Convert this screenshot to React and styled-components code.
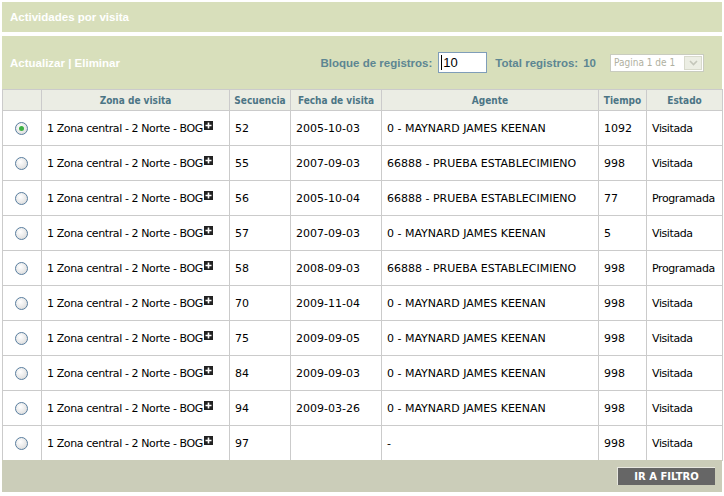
import React from "react";
import styled, { createGlobalStyle } from "styled-components";

const Global = createGlobalStyle`
  html, body { margin: 0; padding: 0; background: #fff; }
  body { font-family: "DejaVu Sans", Verdana, sans-serif; }
`;

const Page = styled.div`
  padding: 2px 2px 0 2px;
  width: 720px;
`;

const TitleBar = styled.div`
  height: 30px;
  background: #d8dfbb;
  display: flex;
  align-items: center;
  padding-left: 8px;
  color: #fff;
  font-family: "Liberation Sans", Arial, sans-serif;
  font-size: 11.5px;
  font-weight: bold;
  margin-bottom: 4px;
`;

const Toolbar = styled.div`
  height: 53px;
  background: #d8dfbb;
  display: flex;
  align-items: center;
  padding: 0 0 0 8px;
  font-family: "Liberation Sans", Arial, sans-serif;
  font-size: 11.5px;
  font-weight: bold;
`;

const Actions = styled.div`
  color: #fff;
  flex: 1;
`;

const Label = styled.span`
  color: #5d8692;
  margin-right: ${(p) => p.$mr || 0}px;
`;

const Input = styled.div`
  width: 49px;
  height: 21px;
  border: 1px solid #7f9db9;
  background: #fff;
  box-sizing: border-box;
  margin: 0 8px 0 6px;
  display: flex;
  align-items: center;
  padding-left: 2px;
  font-family: "Liberation Sans", Arial, sans-serif;
  font-weight: normal;
  font-size: 13px;
  color: #000;
`;

const Caret = styled.span`
  width: 1px;
  height: 15px;
  background: #000;
  margin-right: 1px;
`;

const Select = styled.div`
  margin-left: 14px;
  margin-right: 18px;
  height: 18px;
  width: 94px;
  box-sizing: border-box;
  border: 1px solid #c9ccbf;
  background: #fff;
  display: flex;
  align-items: stretch;
  font-family: "DejaVu Sans Condensed", "DejaVu Sans", sans-serif;
  font-weight: normal;
  font-size: 10px;
  color: #b0b0a0;
`;

const SelectText = styled.div`
  flex: 1;
  display: flex;
  align-items: center;
  padding-left: 3px;
  white-space: nowrap;
  overflow: hidden;
`;

const SelectBtn = styled.div`
  width: 16px;
  margin: 1px;
  background: #eceee4;
  border: 1px solid #d8dacc;
  display: flex;
  align-items: center;
  justify-content: center;
`;

const Table = styled.table`
  border-collapse: collapse;
  width: 720px;
  table-layout: fixed;
  font-size: 11px;
`;

const Th = styled.th`
  height: 20px;
  background: #ebede4;
  border: 1px solid #cbcbcb;
  color: #4c7585;
  font-family: "DejaVu Sans Condensed", "DejaVu Sans", sans-serif;
  font-size: 10px;
  font-weight: bold;
  text-align: center;
  padding: 0;
`;

const Td = styled.td`
  height: 34px;
  border: 1px solid #cbcbcb;
  padding: 0 0 0 5px;
  color: #000;
  white-space: nowrap;
  overflow: hidden;
  letter-spacing: ${(p) => (p.$tight ? "-0.4px" : "0")};
  text-align: ${(p) => (p.$center ? "center" : "left")};
  ${(p) => (p.$center ? "padding: 0 2px 0 0;" : "")}
`;

const Radio = styled.span`
  display: inline-block;
  width: 11px;
  height: 11px;
  border-radius: 50%;
  border: 1px solid #5a7fa0;
  background: radial-gradient(circle at 40% 35%, #ffffff 0%, #e6e6e6 60%, #d0d0d0 100%);
  position: relative;
  vertical-align: middle;
  &::after {
    content: "";
    display: ${(p) => (p.$checked ? "block" : "none")};
    position: absolute;
    left: 3px;
    top: 3px;
    width: 5px;
    height: 5px;
    border-radius: 50%;
    background: #3cb043;
  }
`;

const Plus = styled.svg`
  width: 9px;
  height: 9px;
  vertical-align: 2px;
  margin-left: 1px;
`;

const Footer = styled.div`
  height: 32px;
  background: #cbcdb9;
  display: flex;
  align-items: center;
  justify-content: flex-end;
  padding-right: 7px;
  margin-top: -1px;
`;

const Button = styled.div`
  width: 98px;
  height: 18px;
  box-sizing: border-box;
  background: #666;
  border-top: 1px solid #e8e8e0;
  border-left: 1px solid #e8e8e0;
  color: #fff;
  font-family: "DejaVu Sans", Verdana, sans-serif;
  font-size: 10px;
  font-weight: bold;
  display: flex;
  align-items: center;
  justify-content: center;
  padding-bottom: 1px;
`;

const rows = [
  ["52", "2005-10-03", "0 - MAYNARD JAMES KEENAN", "1092", "Visitada"],
  ["55", "2007-09-03", "66888 - PRUEBA ESTABLECIMIENO", "998", "Visitada"],
  ["56", "2005-10-04", "66888 - PRUEBA ESTABLECIMIENO", "77", "Programada"],
  ["57", "2007-09-03", "0 - MAYNARD JAMES KEENAN", "5", "Visitada"],
  ["58", "2008-09-03", "66888 - PRUEBA ESTABLECIMIENO", "998", "Programada"],
  ["70", "2009-11-04", "0 - MAYNARD JAMES KEENAN", "998", "Visitada"],
  ["75", "2009-09-05", "0 - MAYNARD JAMES KEENAN", "998", "Visitada"],
  ["84", "2009-09-03", "0 - MAYNARD JAMES KEENAN", "998", "Visitada"],
  ["94", "2009-03-26", "0 - MAYNARD JAMES KEENAN", "998", "Visitada"],
  ["97", "", "-", "998", "Visitada"],
];

const PlusIcon = () => (
  <Plus viewBox="0 0 9 9">
    <rect width="9" height="9" fill="#222" />
    <path d="M4.5 1.5v6M1.5 4.5h6" stroke="#fff" strokeWidth="1.6" />
  </Plus>
);

export default function App() {
  return (
    <Page>
      <Global />
      <TitleBar>Actividades por visita</TitleBar>
      <Toolbar>
        <Actions>Actualizar | Eliminar</Actions>
        <Label>Bloque de registros:</Label>
        <Input>
          <Caret />
          10
        </Input>
        <Label $mr={5}>Total registros:</Label>
        <Label>10</Label>
        <Select>
          <SelectText>Pagina 1 de 1</SelectText>
          <SelectBtn>
            <svg width="9" height="6" viewBox="0 0 9 6">
              <path d="M1 1l3.5 3.5L8 1" stroke="#c4c6ba" strokeWidth="1.6" fill="none" />
            </svg>
          </SelectBtn>
        </Select>
      </Toolbar>
      <Table>
        <colgroup>
          <col style={{ width: 39 }} />
          <col style={{ width: 188 }} />
          <col style={{ width: 61 }} />
          <col style={{ width: 91 }} />
          <col style={{ width: 217 }} />
          <col style={{ width: 48 }} />
          <col style={{ width: 76 }} />
        </colgroup>
        <thead>
          <tr>
            <Th></Th>
            <Th>Zona de visita</Th>
            <Th>Secuencia</Th>
            <Th>Fecha de visita</Th>
            <Th>Agente</Th>
            <Th>Tiempo</Th>
            <Th>Estado</Th>
          </tr>
        </thead>
        <tbody>
          {rows.map((r, i) => (
            <tr key={i}>
              <Td $center>
                <Radio $checked={i === 0} />
              </Td>
              <Td $tight>
                1 Zona central - 2 Norte - BOG
                <PlusIcon />
              </Td>
              <Td>{r[0]}</Td>
              <Td>{r[1]}</Td>
              <Td>{r[2]}</Td>
              <Td>{r[3]}</Td>
              <Td $tight>{r[4]}</Td>
            </tr>
          ))}
        </tbody>
      </Table>
      <Footer>
        <Button>IR A FILTRO</Button>
      </Footer>
    </Page>
  );
}
